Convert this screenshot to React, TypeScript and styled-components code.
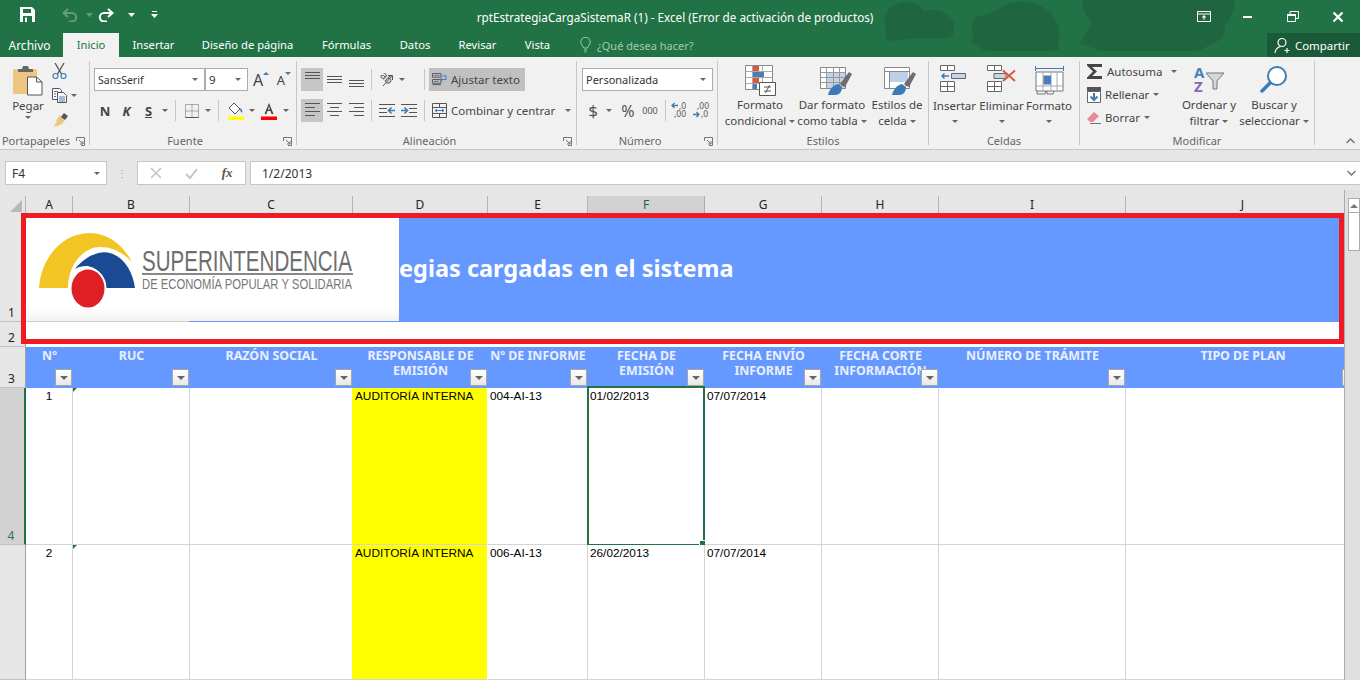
import React from 'react';
import styled, { createGlobalStyle } from 'styled-components';

const GlobalStyle = createGlobalStyle`
  html, body { margin: 0; padding: 0; background: #fff; }
  body { font-family: "Noto Sans", "Open Sans", sans-serif; }
  * { box-sizing: border-box; }
  svg { flex-shrink: 0; }
`;

const Page = styled.div`
  width: 1360px;
  height: 680px;
  overflow: hidden;
  position: relative;
  background: #fff;
`;

/* ---------- window header ---------- */

const Header = styled.header`
  position: relative;
  height: 57px;
  background: #217346;
  color: #fff;
`;

const HeaderPattern = styled.svg`
  position: absolute;
  left: 0;
  top: 0;
`;

const TitleBar = styled.div`
  position: relative;
  display: flex;
  align-items: center;
  height: 33px;
`;

const QuickAccess = styled.div`
  width: 168px;
  display: flex;
  align-items: center;
  height: 100%;
  padding-bottom: 4px;
`;

const QuickButton = styled.div<{ $w: number; $dim?: boolean }>`
  width: ${(p) => p.$w}px;
  display: flex;
  justify-content: center;
  align-items: center;
  opacity: ${(p) => (p.$dim ? 0.3 : 1)};
`;

const WindowTitle = styled.div`
  flex: 1;
  text-align: center;
  font-size: 11.7px;
  white-space: nowrap;
`;

const WindowControls = styled.div`
  width: 178px;
  display: flex;
`;

const WindowButton = styled.div`
  width: 46px;
  height: 28px;
  display: flex;
  align-items: center;
  justify-content: center;
`;

const TabRow = styled.nav`
  position: relative;
  display: flex;
  height: 24px;
  font-size: 11.2px;
`;

const Tab = styled.div<{ $w: number; $active?: boolean; $file?: boolean }>`
  width: ${(p) => p.$w}px;
  display: flex;
  align-items: center;
  justify-content: center;
  white-space: nowrap;
  font-size: ${(p) => (p.$file ? '12px' : '11.2px')};
  margin-right: ${(p) => (p.$file ? '4px' : '0')};
  padding-bottom: ${(p) => (p.$file ? '0' : '1px')};
  background: ${(p) => (p.$active ? '#f1f1f1' : 'transparent')};
  color: ${(p) => (p.$active ? '#217346' : '#fff')};
`;

const SearchHint = styled.div`
  display: flex;
  align-items: center;
  gap: 6px;
  padding-left: 16px;
  font-size: 11px;
  color: #a6c8b5;
`;

const ShareButton = styled.div`
  margin-left: auto;
  width: 93px;
  display: flex;
  align-items: center;
  gap: 3px;
  padding-left: 7px;
  font-size: 11.4px;
  background: #1b5a38;
`;

/* ---------- ribbon ---------- */

const Ribbon = styled.section`
  position: relative;
  display: flex;
  height: 93px;
  background: #f1f1f1;
  border-bottom: 1px solid #c6c6c6;
  font-size: 11.5px;
  color: #444;
`;

const Group = styled.div<{ $w: number }>`
  position: relative;
  width: ${(p) => p.$w}px;
  height: 84px;
  margin-top: 4px;
  border-right: 1px solid #c6c6c6;
  flex-shrink: 0;
`;

const GroupLabel = styled.div<{ $pad?: number }>`
  position: absolute;
  left: 0;
  right: 0;
  bottom: -4px;
  height: 16px;
  line-height: 16px;
  padding-right: ${(p) => p.$pad ?? 0}px;
  text-align: center;
  font-size: 11px;
  color: #666;
`;

const Launcher = styled.svg`
  position: absolute;
  right: 4px;
  bottom: -1px;
`;

const GroupBody = styled.div`
  display: flex;
  height: 68px;
`;

const Stack = styled.div<{ $left?: number }>`
  padding-left: ${(p) => p.$left ?? 0}px;
  padding-top: 7px;
  display: flex;
  flex-direction: column;
  gap: 8px;
`;

const ToolRow = styled.div`
  display: flex;
  align-items: center;
  height: 23px;
`;

const Tool = styled.div<{ $w: number; $active?: boolean }>`
  width: ${(p) => p.$w}px;
  height: 23px;
  display: flex;
  align-items: center;
  justify-content: center;
  flex-shrink: 0;
  background: ${(p) => (p.$active ? '#c6c6c6' : 'transparent')};
`;

const WideTool = styled.div<{ $w: number; $active?: boolean }>`
  width: ${(p) => p.$w}px;
  height: 23px;
  display: flex;
  align-items: center;
  gap: 4px;
  padding-left: 3px;
  white-space: nowrap;
  flex-shrink: 0;
  background: ${(p) => (p.$active ? '#c0c0c0' : 'transparent')};
`;

const Sep = styled.div<{ $l: number; $r: number }>`
  width: 1px;
  height: 21px;
  margin: 0 ${(p) => p.$r}px 0 ${(p) => p.$l}px;
  background: #c6c6c6;
  flex-shrink: 0;
`;

const Combo = styled.div<{ $w: number; $size?: number }>`
  width: ${(p) => p.$w}px;
  height: 23px;
  display: flex;
  align-items: center;
  justify-content: space-between;
  padding: 0 6px 0 3px;
  font-size: ${(p) => p.$size ?? 11.5}px;
  background: #fff;
  border: 1px solid #ababab;
  color: #333;
  flex-shrink: 0;
`;

const Caret = styled.span<{ $left?: number }>`
  display: inline-block;
  width: 0;
  height: 0;
  margin-left: ${(p) => p.$left ?? 0}px;
  border-left: 3px solid transparent;
  border-right: 3px solid transparent;
  border-top: 3px solid #666;
  flex-shrink: 0;
`;

const BoldLetter = styled.span<{ $italic?: boolean; $under?: boolean }>`
  font: ${(p) => (p.$italic ? 'italic bold' : 'bold')} 13px "Noto Sans", sans-serif;
  text-decoration: ${(p) => (p.$under ? 'underline' : 'none')};
  color: #444;
`;

const NumberGlyph = styled.span<{ $size: number }>`
  font-size: ${(p) => p.$size}px;
  color: #555;
`;

const FontSizeGlyph = styled.span<{ $size: number; $down?: boolean }>`
  position: relative;
  font-size: ${(p) => p.$size}px;
  line-height: 18px;
  padding-right: 6px;
  color: #444;
  &::after {
    content: '';
    position: absolute;
    right: 0;
    top: 1px;
    border-left: 3px solid transparent;
    border-right: 3px solid transparent;
    ${(p) => (p.$down ? 'border-top: 3px solid #3f7ab6;' : 'border-bottom: 3px solid #3f7ab6;')}
  }
`;

const OrientLetters = styled.span`
  display: inline-block;
  margin-right: -10px;
  font-size: 11px;
  line-height: 11px;
  color: #555;
  transform: rotate(45deg) translate(-1px, -2px);
`;

const PasteButton = styled.div`
  width: 48px;
  margin-left: 4px;
  padding-top: 4px;
  display: flex;
  flex-direction: column;
  align-items: center;
  gap: 2px;
  line-height: 16px;
`;

const SmallColumn = styled.div`
  display: flex;
  flex-direction: column;
  padding-top: 1px;
  gap: 6px;
`;

const SmallTool = styled.div`
  display: flex;
  align-items: center;
  height: 18px;
  gap: 4px;
`;

const LargeButton = styled.div<{ $w: number }>`
  width: ${(p) => p.$w}px;
  flex-shrink: 0;
  padding-top: 4px;
  display: flex;
  flex-direction: column;
  align-items: center;
  text-align: center;
  white-space: nowrap;
`;

const LargeIcon = styled.div<{ $shift?: number }>`
  height: 35px;
  margin-left: ${(p) => (p.$shift ?? 0) * 2}px;
  display: flex;
  align-items: flex-start;
  justify-content: center;
`;

const LargeLine = styled.div`
  height: 16px;
  line-height: 16px;
  display: flex;
  align-items: center;
  gap: 3px;
`;

const EditColumn = styled.div`
  width: 102px;
  padding-left: 7px;
  margin-top: -1px;
  flex-shrink: 0;
`;

const EditRow = styled.div`
  height: 23px;
  display: flex;
  align-items: center;
  gap: 4px;
  white-space: nowrap;
`;

const Collapse = styled.svg`
  position: absolute;
  right: 5px;
  bottom: 5px;
`;

/* ---------- formula bar ---------- */

const FormulaBar = styled.div`
  display: flex;
  height: 40px;
  padding: 11px 0 5px 5px;
  background: #e6e6e6;
  font-size: 12px;
  color: #333;
`;

const NameBox = styled.div`
  width: 102px;
  display: flex;
  align-items: center;
  justify-content: space-between;
  padding: 0 6px;
  background: #fff;
  border: 1px solid #c6c6c6;
`;

const Grip = styled.div`
  width: 30px;
  display: flex;
  justify-content: center;
  align-items: center;
  color: #999;
  font-size: 10px;
`;

const FxBox = styled.div`
  width: 109px;
  display: flex;
  align-items: center;
  background: #fff;
  border: 1px solid #c6c6c6;
`;

const FxSlot = styled.div`
  width: 36px;
  display: flex;
  align-items: center;
  justify-content: center;
`;

const FxText = styled.span`
  font: italic bold 13px "Liberation Serif", serif;
  color: #555;
`;

const FormulaInput = styled.div`
  flex: 1;
  margin-left: 4px;
  display: flex;
  align-items: center;
  justify-content: space-between;
  padding: 0 4px 0 11px;
  background: #fff;
  border-top: 1px solid #c6c6c6;
  border-bottom: 1px solid #c6c6c6;
  border-left: 1px solid #c6c6c6;
`;

/* ---------- sheet ---------- */

const Sheet = styled.div`
  position: relative;
  height: 490px;
  display: flex;
  overflow: hidden;
  background: #e6e6e6;
`;

const GridArea = styled.div`
  width: 1344px;
  padding-top: 6px;
  flex-shrink: 0;
  overflow: hidden;
`;

const CellGrid = styled.div`
  display: grid;
  grid-template-columns: 26px 47px 117px 163px 135px 100px 117px 117px 117px 187px 234px;
  grid-template-rows: 17px 109px 25px 41px 157px 135px;
  font: 11.8px "Liberation Sans", Arial, sans-serif;
  color: #000;
`;

const Corner = styled.div`
  display: flex;
  align-items: flex-end;
  justify-content: flex-end;
  padding: 0 3px 1px 0;
  border-right: 1px solid #b4b4b4;
`;

const ColHead = styled.div<{ $active?: boolean }>`
  display: flex;
  align-items: center;
  justify-content: center;
  font: 12px "Noto Sans", sans-serif;
  background: ${(p) => (p.$active ? '#d2d2d2' : '#e6e6e6')};
  color: ${(p) => (p.$active ? '#1d5f3a' : '#222')};
  border-right: 1px solid ${(p) => (p.$active ? '#ababab' : '#b4b4b4')};
`;

const RowHead = styled.div<{ $active?: boolean }>`
  display: flex;
  align-items: flex-end;
  justify-content: center;
  padding-right: 2px;
  font: 12px/17px "Noto Sans", sans-serif;
  background: ${(p) => (p.$active ? '#d2d2d2' : '#e6e6e6')};
  color: ${(p) => (p.$active ? '#3d6d58' : '#222')};
  border-right: ${(p) => (p.$active ? '2px solid #217346' : '1px solid #a0a0a0')};
  border-bottom: 1px solid #c0c0c0;
`;

const TitleCell = styled.div`
  grid-column: 2 / 12;
  display: flex;
  align-items: center;
  padding: 1px 0 0 373px;
  background: #6699ff;
  color: #fff;
  font: bold 23.5px "Noto Sans", sans-serif;
  white-space: nowrap;
`;

const SpacerCell = styled.div`
  grid-column: 2 / 12;
  background: #fff;
`;

const HeadCell = styled.div`
  position: relative;
  padding: 1px 1px 0;
  background: #6699ff;
  color: #e9efff;
  font: bold 12.4px/15px "Noto Sans", sans-serif;
  text-align: center;
  overflow: hidden;
`;

const FilterButton = styled.div`
  position: absolute;
  right: 1px;
  bottom: 2px;
  width: 17px;
  height: 17px;
  display: flex;
  align-items: center;
  justify-content: center;
  background: linear-gradient(#ffffff, #e8e8e8);
  border: 1px solid #a6a6a6;
`;

const FilterCaret = styled.span`
  width: 0;
  height: 0;
  border-left: 4px solid transparent;
  border-right: 4px solid transparent;
  border-top: 4px solid #666;
`;

const DataCell = styled.div<{ $center?: boolean; $fill?: string }>`
  position: relative;
  padding: 1px 2px 0;
  line-height: 14px;
  white-space: nowrap;
  text-align: ${(p) => (p.$center ? 'center' : 'left')};
  background: ${(p) => p.$fill ?? '#fff'};
  background-clip: padding-box;
  border-right: 1px solid ${(p) => (p.$fill ? '#fff' : '#d4d4d4')};
  border-bottom: 1px solid #d4d4d4;
  box-shadow: ${(p) => (p.$fill ? `-1px 0 0 ${p.$fill}` : 'none')};
`;

const ErrorFlag = styled.span`
  position: absolute;
  left: 0;
  top: 0;
  width: 0;
  height: 0;
  border-top: 4px solid #107c41;
  border-right: 4px solid transparent;
`;

const Selection = styled.div`
  position: absolute;
  left: -1px;
  top: -2px;
  right: -1px;
  bottom: -2px;
  border: 2px solid #217346;
  &::after {
    content: '';
    position: absolute;
    right: -4px;
    bottom: -4px;
    width: 6px;
    height: 6px;
    background: #217346;
    border: 1px solid #fff;
  }
`;

const ScrollBar = styled.div`
  flex: 1;
  padding: 8px 0 0 3px;
  background: #e0e0e0;
  border-left: 1px solid #ababab;
`;

const ScrollArrow = styled.div`
  height: 15px;
  display: flex;
  align-items: center;
  justify-content: center;
  background: #fff;
  border: 1px solid #ababab;
`;

const ScrollThumb = styled.div`
  height: 39px;
  margin-top: -1px;
  background: #fff;
  border: 1px solid #ababab;
`;

const CaretUp = styled.span`
  width: 0;
  height: 0;
  border-left: 4px solid transparent;
  border-right: 4px solid transparent;
  border-bottom: 4px solid #777;
`;

/* overlays pasted over the sheet in the screenshot */
const LogoBox = styled.svg`
  position: absolute;
  left: 25px;
  top: 23px;
`;

const RedFrame = styled.div`
  position: absolute;
  left: 21px;
  top: 23px;
  width: 1323px;
  height: 131px;
  border: 5px solid #ed1c24;
`;

/* ---------- icons ---------- */

const Save = () => (
  <svg width="15" height="15" viewBox="0 0 15 15">
    <path d="M0 0h12l3 3v12H0z" fill="#fff" />
    <path d="M3 2h8v4H3zM3 9h9v6H3z" fill="#217346" />
    <path d="M5 10.500h2v4.500H5z" fill="#fff" />
  </svg>
);

const Undo = ({ flip }: { flip?: boolean }) => (
  <svg width="16" height="14" viewBox="0 0 16 14" style={flip ? { transform: 'scaleX(-1)' } : undefined}>
    <path d="M6 1 1.500 5 6 9M2 5h8a4.200 4.200 0 0 1 0 8.400H7" fill="none" stroke="#fff" strokeWidth="2" />
  </svg>
);

const SmallCaret = ({ color = '#fff' }: { color?: string }) => (
  <svg width="7" height="4" viewBox="0 0 7 4">
    <path d="M0 0h7L3.500 4z" fill={color} />
  </svg>
);

const CustomizeCaret = () => (
  <svg width="7" height="7" viewBox="0 0 7 7">
    <path d="M1 0h5v1H1zM0 3h7L3.500 7z" fill="#fff" />
  </svg>
);

const RibbonDisplay = () => (
  <svg width="14" height="11" viewBox="0 0 14 11">
    <path d="M.5.5h13v10H.5zM.5 3h13" fill="none" stroke="#fff" />
    <path d="M7 4 4.500 6.500h2V9h1V6.500h2z" fill="#fff" />
  </svg>
);

const Minimize = () => (
  <svg width="12" height="10" viewBox="0 0 12 10">
    <path d="M0 4h9v2H0z" fill="#fff" />
  </svg>
);

const Restore = () => (
  <svg width="12" height="11" viewBox="0 0 12 11">
    <path d="M.5 3.500h8v7h-8zM3 3V.5h8.500v7H9" fill="none" stroke="#fff" />
    <path d="M0 3h9v2H0z" fill="#fff" />
  </svg>
);

const Close = () => (
  <svg width="12" height="12" viewBox="0 0 12 12">
    <path d="M1.500 1.500l9 9M10.500 1.500l-9 9" stroke="#fff" strokeWidth="2.200" />
  </svg>
);

const Bulb = () => (
  <svg width="11" height="16" viewBox="0 0 11 16">
    <path d="M3.500 11C3 8.500.8 7.500.8 5a4.700 4.700 0 0 1 9.400 0c0 2.500-2.200 3.500-2.700 6zM4 13h3M4.500 15h2" fill="none" stroke="#a6c8b5" />
  </svg>
);

const Person = () => (
  <svg width="18" height="17" viewBox="0 0 18 17">
    <circle cx="8" cy="5.500" r="4" fill="none" stroke="#fff" strokeWidth="1.200" />
    <path d="M1 16c0-3.500 3-6 5.500-6.500M13 11v5M10.500 13.500h5" fill="none" stroke="#fff" strokeWidth="1.200" />
  </svg>
);

const Paste = () => (
  <svg width="30" height="31" viewBox="0 0 30 31">
    <rect x="0" y="4" width="24" height="25" rx="1" fill="#eec681" />
    <path d="M5 4h4l1-3h5l1 3h4v3H5z" fill="#666" />
    <path d="M14.500 12h9l5.500 5v13H14.500z" fill="#fff" stroke="#555" />
    <path d="M23.500 12v5H29" fill="none" stroke="#555" />
  </svg>
);

const Scissors = () => (
  <svg width="15" height="16" viewBox="0 0 15 16">
    <path d="M3 0l6.500 11M12 0 5.500 11" stroke="#555" strokeWidth="1.300" fill="none" />
    <circle cx="3.500" cy="13" r="2.500" fill="none" stroke="#3f7ab6" strokeWidth="1.200" />
    <circle cx="11.500" cy="13" r="2.500" fill="none" stroke="#3f7ab6" strokeWidth="1.200" />
  </svg>
);

const Copy = () => (
  <svg width="15" height="15" viewBox="0 0 15 15">
    <path d="M.5.5h7l2 2v9h-9z" fill="#fff" stroke="#555" />
    <path d="M5.500 4.500h6l3 3v7h-9z" fill="#fff" stroke="#555" />
    <path d="M2 3.500h4M2 6h2M2 8.500h2M7 9h6M7 11h6M7 13h6" stroke="#3f7ab6" />
  </svg>
);

const Brush = () => (
  <svg width="17" height="15" viewBox="0 0 17 15">
    <path d="M8 3l5 5-3 4-4 2-5 1 3-2-2 0 3-3-1-1z" fill="#eec681" />
    <path d="M9 5l3-4 4 3-3 4z" fill="#555" />
  </svg>
);

const BorderIcon = () => (
  <svg width="14" height="14" viewBox="0 0 14 14">
    <path d="M.5.5h13v13H.5zM7 .5v13M.5 7h13" fill="none" stroke="#666" strokeDasharray="1 1" />
    <path d="M.5 13.500h13" stroke="#555" />
  </svg>
);

const FillIcon = () => (
  <svg width="17" height="18" viewBox="0 0 17 18">
    <path d="M2 6l5-5 6 6-5 5z" fill="#fff" stroke="#555" />
    <path d="M13 6c2 1 3 3 2 5-1-1-2-2-2-5z" fill="#3f7ab6" />
    <path d="M1 14.500h16v3.500H1z" fill="#ffff00" />
  </svg>
);

const FontColor = () => (
  <svg width="16" height="18" viewBox="0 0 16 18">
    <path d="M8 1 3.500 12h2l1-3h3l1 3h2zM7 7.500 8 4l1 3.500z" fill="#444" fillRule="evenodd" />
    <path d="M0 14.500h16v3.500H0z" fill="#ff0000" />
  </svg>
);

const Lines = ({ rows, w = 15, h = 15 }: { rows: [number, number, number][]; w?: number; h?: number }) => (
  <svg width={w} height={h} viewBox={`0 0 ${w} ${h}`}>
    {rows.map(([y, x1, x2]) => (
      <path key={y} d={`M${x1} ${y + 0.5}H${x2}`} stroke="#555" />
    ))}
  </svg>
);

const OrientArrow = () => (
  <svg width="12" height="14" viewBox="0 0 12 14">
    <path d="M1 13 10 3M6 2.500h4.500V7" fill="none" stroke="#555" />
  </svg>
);

const WrapIcon = () => (
  <svg width="15" height="14" viewBox="0 0 16 15">
    <path d="M.5.5h9v4h-9zM.5 7h9v4H.5zM.5 12.500h9" fill="none" stroke="#555" />
    <path d="M11 3h4v4h-6M11 5 9 7l2 2" fill="none" stroke="#3f7ab6" />
    <path d="M2 2.500h6M2 9h5" stroke="#3f7ab6" />
  </svg>
);

const MergeIcon = () => (
  <svg width="15" height="15" viewBox="0 0 15 15">
    <path d="M.5.5h14v14H.5zM.5 4.500h14M.5 10.500h14M7.500.5v4M7.500 10.500v4" fill="none" stroke="#555" />
    <path d="M3 7.500h9M3 7.500l2-1.500M3 7.500 5 9M12 7.500 10 6M12 7.500 10 9" fill="none" stroke="#3f7ab6" />
  </svg>
);

const IndentIcon = ({ flip }: { flip?: boolean }) => (
  <svg width="16" height="13" viewBox="0 0 16 13" style={flip ? { transform: 'scaleX(-1)' } : undefined}>
    <path d="M0 .5h16M8 4.500h8M8 8.500h8M0 12.500h16" stroke="#555" />
    <path d="M0 6.500h6M3.500 3.500l3 3-3 3" fill="none" stroke="#3f7ab6" strokeWidth="1.600" />
  </svg>
);

const DecimalIcon = ({ more }: { more?: boolean }) => (
  <svg width="18" height="20" viewBox="0 0 18 20">
    <text x={more ? 8 : 5} y="8" fontSize="8.500" fontFamily="Noto Sans" fill="#555">{more ? ',0' : ',00'}</text>
    <text x={more ? 3 : 9} y="16" fontSize="8.500" fontFamily="Noto Sans" fill="#555">{more ? ',00' : ',0'}</text>
    <path d={more ? 'M7 4.500H1M3.500 2 1 4.500 3.500 7' : 'M1 13.500h6M4.500 11 7 13.500 4.500 16'} fill="none" stroke="#3f7ab6" strokeWidth="1.300" />
  </svg>
);

const ConditionalIcon = () => (
  <svg width="31" height="31" viewBox="0 0 31 31">
    <path d="M.5.5h27v24H.5z" fill="#fff" stroke="#888" />
    <path d="M7.500.5v24M17.500.5v24M.5 6.500h27M.5 12.500h27M.5 18.500h27" stroke="#aaa" />
    <path d="M8 1h6v5H8zM8 13h6v5H8z" fill="#d9593a" />
    <path d="M8 7h11v5H8zM8 19h4v5H8z" fill="#4a7ebb" />
    <path d="M14.500 17.500h16v13h-16z" fill="#fff" stroke="#555" />
    <path d="M19 22h7M19 26h7M24.500 20 20.500 28" stroke="#555" />
  </svg>
);

const TableIcon = ({ cellStyle }: { cellStyle?: boolean }) => (
  <svg width="33" height="31" viewBox="0 0 33 31">
    <path d="M.5 2.500h25v21H.5z" fill="#fff" stroke="#888" />
    {cellStyle ? (
      <path d="M6 7h18v10H6z" fill="#bcd0e8" />
    ) : (
      <path d="M7 8h18v15H7z" fill="#c3d3e8" />
    )}
    {cellStyle ? (
      <path d="M.5 6.500h25M5.500 6.500v17" stroke="#888" />
    ) : (
      <path d="M6.500 2.500v21M13.500 2.500v21M19.500 2.500v21M.5 7.500h25M.5 12.500h25M.5 17.500h25" stroke="#999" />
    )}
    <path d="M20 19 29 7l3 2-7 13-3-1z" fill="#6e6e6e" />
    <path d="M8 30c1-5 5-10 10-11l4 3c0 5-3 8-7 8z" fill="#3f7ab6" />
  </svg>
);

const InsertCells = ({ remove }: { remove?: boolean }) => (
  <svg width="30" height="27" viewBox="0 0 30 27">
    <path d="M.5.5h14v5H.5zM7.500.5v5M.5 16.500h14v10H.5zM.5 21.500h14M7.500 16.500v10" fill="#fff" stroke="#666" />
    {remove ? (
      <>
        <path d="M7 8.500h12v5H7z" fill="#c3d6ea" stroke="#666" />
        <path d="M16 5.500 28 16M28 5.500 16 16" stroke="#d9593a" strokeWidth="2" />
      </>
    ) : (
      <>
        <path d="M11.500 8.500h14v5h-14z" fill="#c3d6ea" stroke="#666" />
        <path d="M9 11H2M4.500 8.500 2 11l2.500 2.500" fill="none" stroke="#3f7ab6" strokeWidth="1.500" />
      </>
    )}
  </svg>
);

const FormatCells = () => (
  <svg width="29" height="31" viewBox="0 0 29 31">
    <path d="M.5 1v5M28.500 1v5M1 3.500h27" stroke="#3f7ab6" />
    <path d="M1 7h27v19H1z" fill="#fff" stroke="#777" />
    <path d="M8 7v19M16 7v19M22 7v19M1 21h27" stroke="#aaa" />
    <path d="M8.500 10.500H16v9H8.500z" fill="#4a7ebb" />
    <path d="M2 26v3h8l1-3M12 26v3h6l1-3" fill="none" stroke="#777" />
  </svg>
);

const Sigma = () => (
  <svg width="16" height="15" viewBox="0 0 16 15">
    <path d="M0 0h15v3H5l5 4.500L5 12h10v3H0v-1.500L6 7.500 0 1.500z" fill="#444" />
  </svg>
);

const FillDown = () => (
  <svg width="14" height="16" viewBox="0 0 14 16">
    <path d="M0 0h14v4H0z" fill="#555" />
    <path d="M.5 4.500h13v11H.5z" fill="#fff" stroke="#666" />
    <path d="M7 6v7M3.500 9.500 7 13l3.500-3.500" fill="none" stroke="#3f7ab6" strokeWidth="2" />
  </svg>
);

const Eraser = () => (
  <svg width="14" height="13" viewBox="0 0 14 13">
    <path d="M0 8 7 1l5 4-6 6H3z" fill="#ea8a97" />
    <path d="M3 12.500h11" stroke="#777" />
  </svg>
);

const SortFilter = () => (
  <svg width="31" height="28" viewBox="0 0 31 28">
    <text x="0" y="13" fontSize="15" fontWeight="bold" fontFamily="Noto Sans" fill="#4a7ebb">A</text>
    <text x="0" y="27" fontSize="15" fontWeight="bold" fontFamily="Noto Sans" fill="#8e62b8">Z</text>
    <path d="M12 8h18l-7 8v8h-4v-8z" fill="#d6d6d6" stroke="#777" />
  </svg>
);

const Magnifier = () => (
  <svg width="28" height="28" viewBox="0 0 28 28">
    <circle cx="17" cy="11" r="9" fill="#fff" stroke="#3f7ab6" strokeWidth="2" />
    <path d="M10 18 2 26" stroke="#3f7ab6" strokeWidth="3.500" strokeLinecap="round" />
  </svg>
);

const LauncherIcon = () => (
  <Launcher width="9" height="9" viewBox="0 0 9 9">
    <path d="M.5 4V.5H8.500V8.500H5M3 3l4 4M7 4v3H4" fill="none" stroke="#777" />
  </Launcher>
);

const Logo = () => (
  <LogoBox width="374" height="109" viewBox="25 213 374 109">
    <defs>
      <linearGradient id="logoFade" x1="0" y1="0" x2="0" y2="1">
        <stop offset="0.88" stopColor="#fff" />
        <stop offset="1" stopColor="#f1f1f1" />
      </linearGradient>
    </defs>
    <rect x="25" y="213" width="374" height="108" fill="url(#logoFade)" />
    <rect x="25" y="321" width="164" height="1" fill="#cfcfcf" />
    <rect x="189" y="321" width="210" height="1" fill="#6699ff" />
    <path d="M39 288C41 258 62 233 90 233c18 0 33 12 42 29-10-10-20-15-32-15-17 0-32 18-32 41z" fill="#f2c524" />
    <path d="M75 269c10-13 25-19 35-16 14 4 23 19 25 35h-29c-1-13-11-22-20-22-4 0-8 1-11 3z" fill="#1b4a94" />
    <ellipse cx="88" cy="288.500" rx="17.500" ry="20" fill="#de2025" stroke="#fff" strokeWidth="2" />
    <text x="142" y="271" fontFamily="Liberation Sans" fontSize="29" fill="#6e6e6e" textLength="210" lengthAdjust="spacingAndGlyphs">SUPERINTENDENCIA</text>
    <rect x="142" y="273" width="211" height="2" fill="#888" />
    <text x="142" y="289" fontFamily="Liberation Sans" fontSize="14" fill="#777" textLength="210" lengthAdjust="spacingAndGlyphs">DE ECONOMÍA POPULAR Y SOLIDARIA</text>
  </LogoBox>
);

/* ---------- data ---------- */

const columns = ['A', 'B', 'C', 'D', 'E', 'F', 'G', 'H', 'I', 'J'];

const headers = [
  'Nº',
  'RUC',
  'RAZÓN SOCIAL',
  'RESPONSABLE DE EMISIÓN',
  'Nº DE INFORME',
  'FECHA DE EMISIÓN',
  'FECHA ENVÍO INFORME',
  'FECHA CORTE INFORMACIÓN',
  'NÚMERO DE TRÁMITE',
  'TIPO DE PLAN',
];

const rows = [
  { n: '1', informe: '004-AI-13', emision: '01/02/2013', envio: '07/07/2014' },
  { n: '2', informe: '006-AI-13', emision: '26/02/2013', envio: '07/07/2014' },
];

type LargeToolProps = {
  w: number;
  icon: React.ReactNode;
  lines: string[];
  caretLine?: boolean;
  shift?: number;
};

const LargeTool = ({ w, icon, lines, caretLine, shift }: LargeToolProps) => (
  <LargeButton $w={w}>
    <LargeIcon $shift={shift}>{icon}</LargeIcon>
    {lines.map((line, i) => (
      <LargeLine key={line}>
        {line}
        {caretLine && i === lines.length - 1 ? <Caret /> : null}
      </LargeLine>
    ))}
    {!caretLine && (
      <LargeLine>
        <Caret />
      </LargeLine>
    )}
  </LargeButton>
);

export default function App() {
  return (
    <Page>
      <GlobalStyle />
      <Header>
        <HeaderPattern width="1360" height="57" viewBox="0 0 1360 57">
          <path d="M885 20c0-12 12-18 22-18 8 0 13 4 16 9 8-2 24-2 30 10 2 6 2 14-4 17-14 2-34-2-50 2-6 1-12 1-14-1 3-3 0-8 0-19z" fill="#1f6640" />
          <path d="M975 18c8-4 18-4 22-8 8-6 18-9 30-8 14 1 30 12 32 28 1 8-2 14 0 20l-8 1H990c-8 0-14-6-20-9 4-2 4-6 2-12-1-5 0-9 3-12z" fill="#1f6640" />
          <path d="M1082 0h152c2 8-2 18-10 26 4 4 0 14-16 20-4 3-10 5-16 5h-94c-6-4-14-6-18-8 4-6 10-16 12-20-2-4-10-10-10-23z" fill="#1f6640" />
        </HeaderPattern>
        <TitleBar>
          <QuickAccess>
            <QuickButton $w={54}><Save /></QuickButton>
            <QuickButton $w={31} $dim><Undo /></QuickButton>
            <QuickButton $w={8} $dim><SmallCaret /></QuickButton>
            <QuickButton $w={26}><Undo flip /></QuickButton>
            <QuickButton $w={25}><SmallCaret /></QuickButton>
            <QuickButton $w={21}><CustomizeCaret /></QuickButton>
          </QuickAccess>
          <WindowTitle>rptEstrategiaCargaSistemaR (1) - Excel (Error de activación de productos)</WindowTitle>
          <WindowControls>
            <WindowButton><RibbonDisplay /></WindowButton>
            <WindowButton><Minimize /></WindowButton>
            <WindowButton><Restore /></WindowButton>
            <WindowButton><Close /></WindowButton>
          </WindowControls>
        </TitleBar>
        <TabRow>
          <Tab $w={59} $file>Archivo</Tab>
          <Tab $w={56} $active>Inicio</Tab>
          <Tab $w={69}>Insertar</Tab>
          <Tab $w={119}>Diseño de página</Tab>
          <Tab $w={79}>Fórmulas</Tab>
          <Tab $w={58}>Datos</Tab>
          <Tab $w={67}>Revisar</Tab>
          <Tab $w={53}>Vista</Tab>
          <SearchHint><Bulb />¿Qué desea hacer?</SearchHint>
          <ShareButton><Person />Compartir</ShareButton>
        </TabRow>
      </Header>

      <Ribbon>
        <Group $w={90}>
          <GroupBody>
            <PasteButton>
              <Paste />
              <span>Pegar</span>
              <Caret />
            </PasteButton>
            <SmallColumn>
              <SmallTool><Scissors /></SmallTool>
              <SmallTool><Copy /><Caret /></SmallTool>
              <SmallTool><Brush /></SmallTool>
            </SmallColumn>
          </GroupBody>
          <GroupLabel $pad={17}>Portapapeles</GroupLabel>
          <LauncherIcon />
        </Group>

        <Group $w={207}>
          <Stack $left={4}>
            <ToolRow>
              <Combo $w={111} $size={10.5}>SansSerif<Caret /></Combo>
              <Combo $w={43}>9<Caret /></Combo>
              <Tool $w={26}><FontSizeGlyph $size={16}>A</FontSizeGlyph></Tool>
              <Tool $w={20}><FontSizeGlyph $size={13} $down>A</FontSizeGlyph></Tool>
            </ToolRow>
            <ToolRow>
              <Tool $w={22}><BoldLetter>N</BoldLetter></Tool>
              <Tool $w={21}><BoldLetter $italic>K</BoldLetter></Tool>
              <Tool $w={23}><BoldLetter $under>S</BoldLetter></Tool>
              <Tool $w={10}><Caret /></Tool>
              <Sep $l={5} $r={5} />
              <Tool $w={22}><BorderIcon /></Tool>
              <Tool $w={10}><Caret /></Tool>
              <Sep $l={5} $r={5} />
              <Tool $w={22}><FillIcon /></Tool>
              <Tool $w={12}><Caret /></Tool>
              <Tool $w={22}><FontColor /></Tool>
              <Tool $w={12}><Caret /></Tool>
            </ToolRow>
          </Stack>
          <GroupLabel $pad={16}>Fuente</GroupLabel>
          <LauncherIcon />
        </Group>

        <Group $w={280}>
          <Stack $left={4}>
            <ToolRow>
              <Tool $w={22} $active><Lines rows={[[0, 0, 15], [3, 0, 15], [6, 0, 15]]} /></Tool>
              <Tool $w={22}><Lines rows={[[4, 0, 15], [7, 0, 15], [10, 0, 15]]} /></Tool>
              <Tool $w={22}><Lines rows={[[8, 0, 15], [11, 0, 15], [14, 0, 15]]} /></Tool>
              <Sep $l={4} $r={4} />
              <Tool $w={22}><OrientLetters>ab</OrientLetters><OrientArrow /></Tool>
              <Tool $w={8}><Caret /></Tool>
              <Sep $l={18} $r={4} />
              <WideTool $w={96} $active><WrapIcon />Ajustar texto</WideTool>
            </ToolRow>
            <ToolRow>
              <Tool $w={22} $active><Lines rows={[[0, 0, 15], [4, 0, 10], [8, 0, 15], [12, 0, 10]]} /></Tool>
              <Tool $w={22}><Lines rows={[[0, 0, 15], [4, 3, 12], [8, 0, 15], [12, 3, 12]]} /></Tool>
              <Tool $w={22}><Lines rows={[[0, 0, 15], [4, 5, 15], [8, 0, 15], [12, 5, 15]]} /></Tool>
              <Sep $l={4} $r={4} />
              <Tool $w={22}><IndentIcon flip /></Tool>
              <Tool $w={22}><IndentIcon /></Tool>
              <Sep $l={4} $r={4} />
              <WideTool $w={143}><MergeIcon />Combinar y centrar<Caret $left={6} /></WideTool>
            </ToolRow>
          </Stack>
          <GroupLabel $pad={14}>Alineación</GroupLabel>
          <LauncherIcon />
        </Group>

        <Group $w={141}>
          <Stack $left={5}>
            <ToolRow>
              <Combo $w={131} $size={11}>Personalizada<Caret /></Combo>
            </ToolRow>
            <ToolRow>
              <Tool $w={22}><NumberGlyph $size={17}>$</NumberGlyph></Tool>
              <Tool $w={10}><Caret /></Tool>
              <Tool $w={28}><NumberGlyph $size={16}>%</NumberGlyph></Tool>
              <Tool $w={16}><NumberGlyph $size={9}>000</NumberGlyph></Tool>
              <Sep $l={7} $r={4} />
              <Tool $w={20}><DecimalIcon more /></Tool>
              <Tool $w={22}><DecimalIcon /></Tool>
            </ToolRow>
          </Stack>
          <GroupLabel $pad={14}>Número</GroupLabel>
          <LauncherIcon />
        </Group>

        <Group $w={211}>
          <GroupBody>
            <LargeTool w={84} icon={<ConditionalIcon />} lines={['Formato', 'condicional']} caretLine />
            <LargeTool w={60} icon={<TableIcon />} lines={['Dar formato', 'como tabla']} caretLine shift={4} />
            <LargeTool w={70} icon={<TableIcon cellStyle />} lines={['Estilos de', 'celda']} caretLine shift={3} />
          </GroupBody>
          <GroupLabel>Estilos</GroupLabel>
        </Group>

        <Group $w={151}>
          <GroupBody>
            <LargeTool w={51} icon={<InsertCells />} lines={['Insertar']} />
            <LargeTool w={43} icon={<InsertCells remove />} lines={['Eliminar']} />
            <LargeTool w={52} icon={<FormatCells />} lines={['Formato']} />
          </GroupBody>
          <GroupLabel>Celdas</GroupLabel>
        </Group>

        <Group $w={235}>
          <GroupBody>
            <EditColumn>
              <EditRow><Sigma />Autosuma<Caret $left={5} /></EditRow>
              <EditRow><FillDown />Rellenar<Caret /></EditRow>
              <EditRow><Eraser />Borrar<Caret /></EditRow>
            </EditColumn>
            <LargeTool w={54} icon={<SortFilter />} lines={['Ordenar y', 'filtrar']} caretLine />
            <LargeTool w={76} icon={<Magnifier />} lines={['Buscar y', 'seleccionar']} caretLine />
          </GroupBody>
          <GroupLabel>Modificar</GroupLabel>
        </Group>
        <Collapse width="9" height="6" viewBox="0 0 9 6">
          <path d="M.5 5 4.500 1l4 4" fill="none" stroke="#777" strokeWidth="1.500" />
        </Collapse>
      </Ribbon>

      <FormulaBar>
        <NameBox>F4<Caret /></NameBox>
        <Grip>⋮</Grip>
        <FxBox>
          <FxSlot>
            <svg width="12" height="12" viewBox="0 0 12 12"><path d="M1 1l10 10M11 1 1 11" stroke="#c4c4c4" strokeWidth="1.500" /></svg>
          </FxSlot>
          <FxSlot>
            <svg width="13" height="11" viewBox="0 0 13 11"><path d="M1 6l4 4 7-9" fill="none" stroke="#c4c4c4" strokeWidth="2" /></svg>
          </FxSlot>
          <FxSlot><FxText>fx</FxText></FxSlot>
        </FxBox>
        <FormulaInput>
          1/2/2013
          <svg width="9" height="6" viewBox="0 0 9 6"><path d="M.5 1l4 4 4-4" fill="none" stroke="#777" strokeWidth="1.500" /></svg>
        </FormulaInput>
      </FormulaBar>

      <Sheet>
        <GridArea>
          <CellGrid>
            <Corner>
              <svg width="12" height="12" viewBox="0 0 12 12"><path d="M12 0v12H0z" fill="#b8b8b8" /></svg>
            </Corner>
            {columns.map((c) => (
              <ColHead key={c} $active={c === 'F'}>{c}</ColHead>
            ))}

            <RowHead>1</RowHead>
            <TitleCell>egias cargadas en el sistema</TitleCell>

            <RowHead>2</RowHead>
            <SpacerCell />

            <RowHead>3</RowHead>
            {headers.map((h) => (
              <HeadCell key={h}>
                {h}
                <FilterButton><FilterCaret /></FilterButton>
              </HeadCell>
            ))}

            {rows.map((r, i) => (
              <React.Fragment key={r.n}>
                <RowHead $active={i === 0}>{i === 0 ? '4' : ''}</RowHead>
                <DataCell $center>{r.n}</DataCell>
                <DataCell><ErrorFlag /></DataCell>
                <DataCell />
                <DataCell $fill="#ffff00">AUDITORÍA INTERNA</DataCell>
                <DataCell>{r.informe}</DataCell>
                <DataCell>
                  {r.emision}
                  {i === 0 ? <Selection /> : null}
                </DataCell>
                <DataCell>{r.envio}</DataCell>
                <DataCell />
                <DataCell />
                <DataCell />
              </React.Fragment>
            ))}
          </CellGrid>
        </GridArea>
        <ScrollBar>
          <ScrollArrow><CaretUp /></ScrollArrow>
          <ScrollThumb />
        </ScrollBar>
        <Logo />
        <RedFrame />
      </Sheet>
    </Page>
  );
}
